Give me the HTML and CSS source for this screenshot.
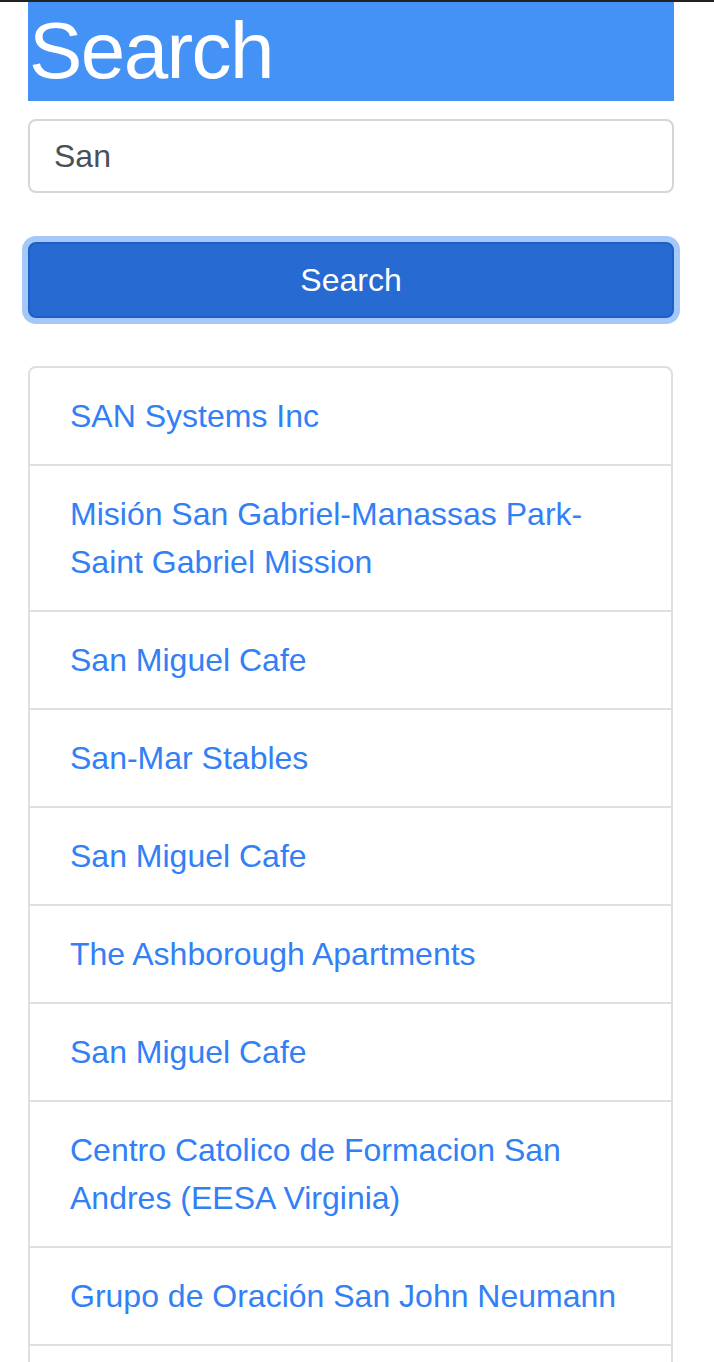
FILE: index.html
```html
<!DOCTYPE html>
<html lang="en">
<head>
<meta charset="utf-8">
<title>Search</title>
<link rel="stylesheet" href="styles.css">
</head>
<body>
<div class="topbar"></div>
<main class="container">
  <h1 class="title">Search</h1>
  <form class="search-form">
    <input class="search-input" type="text" value="San">
    <button class="search-btn" type="button">Search</button>
  </form>
  <ul class="results">
    <li class="result"><a href="#">SAN Systems Inc</a></li>
    <li class="result"><a href="#">Misión San Gabriel-Manassas Park-Saint Gabriel Mission</a></li>
    <li class="result"><a href="#">San Miguel Cafe</a></li>
    <li class="result"><a href="#">San-Mar Stables</a></li>
    <li class="result"><a href="#">San Miguel Cafe</a></li>
    <li class="result"><a href="#">The Ashborough Apartments</a></li>
    <li class="result"><a href="#">San Miguel Cafe</a></li>
    <li class="result"><a href="#">Centro Catolico de Formacion San Andres (EESA Virginia)</a></li>
    <li class="result"><a href="#">Grupo de Oración San John Neumann</a></li>
    <li class="result"><a href="#">San Jose Mission</a></li>
  </ul>
</main>
</body>
</html>
```
FILE: styles.css
```css
html, body {
  margin: 0;
  padding: 0;
  background: #fff;
}
body {
  font-family: "Liberation Sans", Arial, sans-serif;
  font-size: 32px;
  line-height: 48px;
  color: #212529;
  overflow: hidden;
}
.topbar {
  height: 2px;
  background: #222;
}
.container {
  width: 646px;
  margin-left: 28px;
}
.title {
  box-sizing: border-box;
  margin: 0 0 18px 0;
  height: 99px;
  padding: 2px 0 0 1px;
  background: #4592f7;
  color: #fff;
  font-size: 80px;
  line-height: 94px;
  font-weight: 400;
  letter-spacing: -1.6px;
}
.search-form {
  display: flex;
  flex-direction: column;
  gap: 49px;
}
.search-input {
  box-sizing: border-box;
  width: 100%;
  height: 74px;
  margin: 0;
  padding: 0 24px;
  border: 2px solid #d3d6da;
  border-radius: 8px;
  font-family: inherit;
  font-size: 32px;
  color: #495057;
  outline: none;
}
.search-btn {
  box-sizing: border-box;
  width: 100%;
  height: 76px;
  margin: 0;
  padding: 0;
  border: 2px solid #1f5ec4;
  border-radius: 8px;
  background: #266ad2;
  color: #fff;
  font-family: inherit;
  font-size: 32px;
  box-shadow: 0 0 0 6px #a4c8f8;
}
.results {
  box-sizing: border-box;
  list-style: none;
  width: 645px;
  margin: 48px 0 0 0;
  padding: 0;
  border: 2px solid #dfdfdf;
  border-radius: 8px;
}
.result {
  padding: 24px 40px;
  border-top: 2px solid #dfdfdf;
}
.result:first-child {
  border-top: 0;
}
.result a {
  color: #3280f6;
  text-decoration: none;
}
```
